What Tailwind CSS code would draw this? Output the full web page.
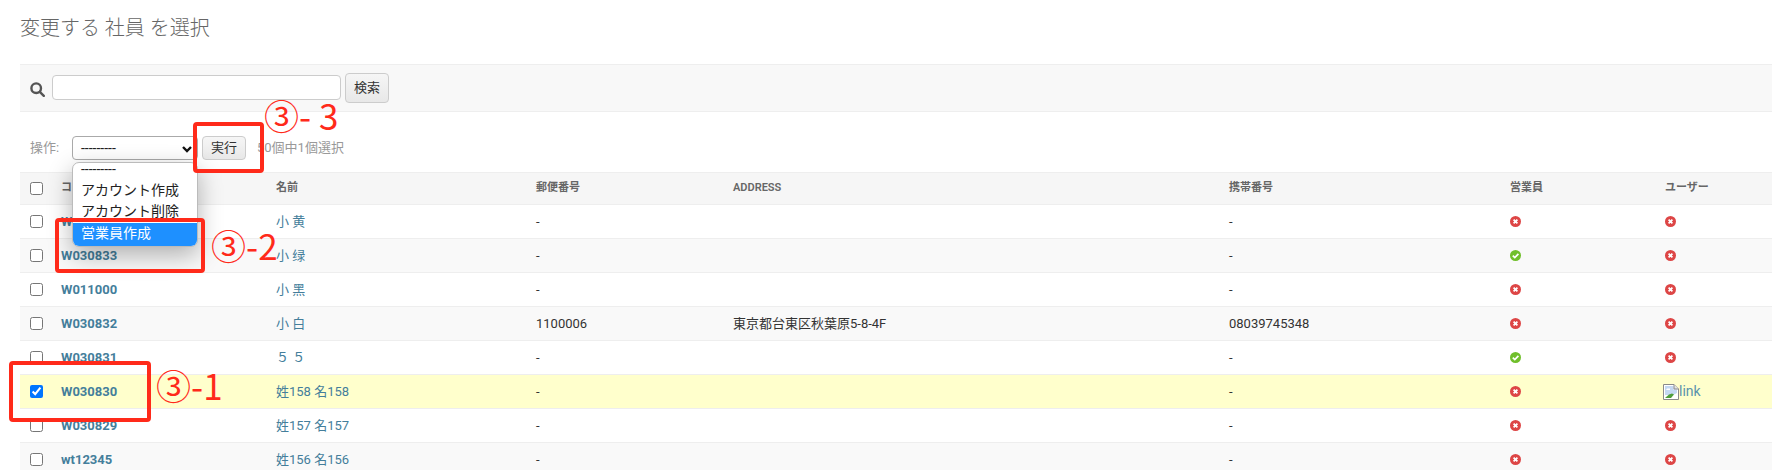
<!DOCTYPE html>
<html lang="ja">
<head>
    <meta charset="UTF-8">
    <title>変更する 社員 を選択</title>
    <script src="https://cdn.jsdelivr.net/npm/@tailwindcss/browser@4"></script>
</head>
<body class="bg-white h-[470px] w-[1772px] overflow-hidden relative font-['Roboto','Noto_Sans_CJK_JP',sans-serif] text-[13px] text-[#333]">

    <div class="pl-5">
        <h1 class="h-[64px] pt-[15px] text-[20px] leading-[26px] font-light text-[#666]">変更する 社員 を選択</h1>

        <!-- search -->
        <div class="h-[48px] flex items-center bg-[#f8f8f8] border-y border-[#eee] pl-[10px]">
            <svg class="w-[15px] h-[15px] mr-[7px] mt-[2px]" viewBox="0 0 15 15" fill="none" stroke="#555" stroke-width="2.4">
                <circle cx="6.200" cy="6.200" r="4.800"/>
                <path d="M9.800 9.800l4 4" stroke-linecap="round"/>
            </svg>
            <input type="text" class="w-[289px] h-[25px] mb-[2px] bg-white border border-[#ccc] rounded-[4px]">
            <button class="w-[44px] h-[30px] ml-[4px] border border-[#ccc] rounded-[4px] bg-linear-to-b from-[#f6f6f6] to-[#e8e8e8] text-[#333]">検索</button>
        </div>

        <!-- actions -->
        <div class="h-[60px] flex items-center pl-[10px] pt-[14px] pb-[2px] text-[#999]">
            <span class="w-[42px]">操作:</span>
            <div class="relative w-[126px] h-[24px] border border-[#aaa] rounded-[4px] bg-white flex items-center pl-[8px] text-[14px] text-[#222]">
                ---------
                <svg class="absolute right-[5px] top-[9px] w-[10px] h-[7px]" viewBox="0 0 10 7" fill="none" stroke="#111" stroke-width="2.4"><path d="M1 1l4 4 4-4"/></svg>
            </div>
            <button class="w-[44px] h-[24px] ml-[4px] border border-[#ccc] rounded-[4px] bg-linear-to-b from-[#f6f6f6] to-[#e8e8e8] text-[#333]">実行</button>
            <span class="ml-[11px]">50個中1個選択</span>
        </div>

        <!-- change list -->
        <table class="table-fixed border-collapse w-[1752px] text-left">
            <colgroup>
                <col class="w-[31px]"><col class="w-[215px]"><col class="w-[260px]"><col class="w-[197px]">
                <col class="w-[496px]"><col class="w-[281px]"><col class="w-[155px]"><col class="w-[117px]">
            </colgroup>
            <thead>
                <tr class="h-[32px] bg-[#f6f6f6] border-y border-[#eee] text-[11px] font-semibold text-[#666]">
                    <th class="pl-[10px]"><input type="checkbox" class="block w-[13px] h-[13px]"></th>
                    <th class="pl-[10px] font-semibold">コード</th>
                    <th class="pl-[10px] font-semibold">名前</th>
                    <th class="pl-[10px] font-semibold">郵便番号</th>
                    <th class="pl-[10px] font-semibold">ADDRESS</th>
                    <th class="pl-[10px] font-semibold">携帯番号</th>
                    <th class="pl-[10px] font-semibold">営業員</th>
                    <th class="pl-[10px] font-semibold">ユーザー</th>
                </tr>
            </thead>
            <tbody>
                <tr class="h-[34px] border-b border-[#eee] bg-white">
                    <td class="pl-[10px]"><input type="checkbox" class="block w-[13px] h-[13px]"></td>
                    <td class="pl-[10px] font-bold text-[#447e9b]">W030834</td>
                    <td class="pl-[10px] text-[#447e9b]">小 黄</td>
                    <td class="pl-[10px]">-</td><td class="pl-[10px]"></td><td class="pl-[10px]">-</td>
                    <td class="pl-[10px]"><svg class="w-[11px] h-[11px]" viewBox="0 0 11 11"><circle cx="5.5" cy="5.5" r="5.5" fill="#dd4646"/><path d="M3.6 3.6l3.8 3.8M7.4 3.6l-3.8 3.8" stroke="#fff" stroke-width="1.8"/></svg></td>
                    <td class="pl-[10px]"><svg class="w-[11px] h-[11px]" viewBox="0 0 11 11"><circle cx="5.5" cy="5.5" r="5.5" fill="#dd4646"/><path d="M3.6 3.6l3.8 3.8M7.4 3.6l-3.8 3.8" stroke="#fff" stroke-width="1.8"/></svg></td>
                </tr>
                <tr class="h-[34px] border-b border-[#eee] bg-[#f9f9f9]">
                    <td class="pl-[10px]"><input type="checkbox" class="block w-[13px] h-[13px]"></td>
                    <td class="pl-[10px] font-bold text-[#447e9b]">W030833</td>
                    <td class="pl-[10px] text-[#447e9b]">小 绿</td>
                    <td class="pl-[10px]">-</td><td class="pl-[10px]"></td><td class="pl-[10px]">-</td>
                    <td class="pl-[10px]"><svg class="w-[11px] h-[11px]" viewBox="0 0 11 11"><circle cx="5.5" cy="5.5" r="5.5" fill="#70bf2b"/><path d="M2.8 5.6l2 2 3.6-3.8" fill="none" stroke="#fff" stroke-width="1.7"/></svg></td>
                    <td class="pl-[10px]"><svg class="w-[11px] h-[11px]" viewBox="0 0 11 11"><circle cx="5.5" cy="5.5" r="5.5" fill="#dd4646"/><path d="M3.6 3.6l3.8 3.8M7.4 3.6l-3.8 3.8" stroke="#fff" stroke-width="1.8"/></svg></td>
                </tr>
                <tr class="h-[34px] border-b border-[#eee] bg-white">
                    <td class="pl-[10px]"><input type="checkbox" class="block w-[13px] h-[13px]"></td>
                    <td class="pl-[10px] font-bold text-[#447e9b]">W011000</td>
                    <td class="pl-[10px] text-[#447e9b]">小 黑</td>
                    <td class="pl-[10px]">-</td><td class="pl-[10px]"></td><td class="pl-[10px]">-</td>
                    <td class="pl-[10px]"><svg class="w-[11px] h-[11px]" viewBox="0 0 11 11"><circle cx="5.5" cy="5.5" r="5.5" fill="#dd4646"/><path d="M3.6 3.6l3.8 3.8M7.4 3.6l-3.8 3.8" stroke="#fff" stroke-width="1.8"/></svg></td>
                    <td class="pl-[10px]"><svg class="w-[11px] h-[11px]" viewBox="0 0 11 11"><circle cx="5.5" cy="5.5" r="5.5" fill="#dd4646"/><path d="M3.6 3.6l3.8 3.8M7.4 3.6l-3.8 3.8" stroke="#fff" stroke-width="1.8"/></svg></td>
                </tr>
                <tr class="h-[34px] border-b border-[#eee] bg-[#f9f9f9]">
                    <td class="pl-[10px]"><input type="checkbox" class="block w-[13px] h-[13px]"></td>
                    <td class="pl-[10px] font-bold text-[#447e9b]">W030832</td>
                    <td class="pl-[10px] text-[#447e9b]">小 白</td>
                    <td class="pl-[10px]">1100006</td><td class="pl-[10px]">東京都台東区秋葉原5-8-4F</td><td class="pl-[10px]">08039745348</td>
                    <td class="pl-[10px]"><svg class="w-[11px] h-[11px]" viewBox="0 0 11 11"><circle cx="5.5" cy="5.5" r="5.5" fill="#dd4646"/><path d="M3.6 3.6l3.8 3.8M7.4 3.6l-3.8 3.8" stroke="#fff" stroke-width="1.8"/></svg></td>
                    <td class="pl-[10px]"><svg class="w-[11px] h-[11px]" viewBox="0 0 11 11"><circle cx="5.5" cy="5.5" r="5.5" fill="#dd4646"/><path d="M3.6 3.6l3.8 3.8M7.4 3.6l-3.8 3.8" stroke="#fff" stroke-width="1.8"/></svg></td>
                </tr>
                <tr class="h-[34px] border-b border-[#eee] bg-white">
                    <td class="pl-[10px]"><input type="checkbox" class="block w-[13px] h-[13px]"></td>
                    <td class="pl-[10px] font-bold text-[#447e9b]">W030831</td>
                    <td class="pl-[10px] text-[#447e9b]">５ ５</td>
                    <td class="pl-[10px]">-</td><td class="pl-[10px]"></td><td class="pl-[10px]">-</td>
                    <td class="pl-[10px]"><svg class="w-[11px] h-[11px]" viewBox="0 0 11 11"><circle cx="5.5" cy="5.5" r="5.5" fill="#70bf2b"/><path d="M2.8 5.6l2 2 3.6-3.8" fill="none" stroke="#fff" stroke-width="1.7"/></svg></td>
                    <td class="pl-[10px]"><svg class="w-[11px] h-[11px]" viewBox="0 0 11 11"><circle cx="5.5" cy="5.5" r="5.5" fill="#dd4646"/><path d="M3.6 3.6l3.8 3.8M7.4 3.6l-3.8 3.8" stroke="#fff" stroke-width="1.8"/></svg></td>
                </tr>
                <tr class="h-[34px] border-b border-[#eee] bg-[#ffc]">
                    <td class="pl-[10px]"><input type="checkbox" checked class="block w-[13px] h-[13px] accent-[#0075ff]"></td>
                    <td class="pl-[10px] font-bold text-[#447e9b]">W030830</td>
                    <td class="pl-[10px] text-[#447e9b]">姓158 名158</td>
                    <td class="pl-[10px]">-</td><td class="pl-[10px]"></td><td class="pl-[10px]">-</td>
                    <td class="pl-[10px]"><svg class="w-[11px] h-[11px]" viewBox="0 0 11 11"><circle cx="5.5" cy="5.5" r="5.5" fill="#dd4646"/><path d="M3.6 3.6l3.8 3.8M7.4 3.6l-3.8 3.8" stroke="#fff" stroke-width="1.8"/></svg></td>
                    <td class="pl-[8px] text-[#5b93ad]">
                        <span class="flex items-center text-[14px]">
                            <svg class="w-[16px] h-[16px]" viewBox="0 0 16 16"><path d="M.5.5H11L15.500 5v10.500H.5z" fill="#fff" stroke="#8a8a8a"/><path d="M2 2h8.500v3.500H14V9L10 11H2z" fill="#c4d8f2"/><path d="M4 4.500h3v1.500H3z" fill="#fff"/><path d="M11 .5V5h4.500" fill="#e4e4e4" stroke="#8a8a8a"/><path d="M2 14l4-3.500 3-1 2 1-3 3.500z" fill="#4f9e3c"/></svg>link
                        </span>
                    </td>
                </tr>
                <tr class="h-[34px] border-b border-[#eee] bg-white">
                    <td class="pl-[10px]"><input type="checkbox" class="block w-[13px] h-[13px]"></td>
                    <td class="pl-[10px] font-bold text-[#447e9b]">W030829</td>
                    <td class="pl-[10px] text-[#447e9b]">姓157 名157</td>
                    <td class="pl-[10px]">-</td><td class="pl-[10px]"></td><td class="pl-[10px]">-</td>
                    <td class="pl-[10px]"><svg class="w-[11px] h-[11px]" viewBox="0 0 11 11"><circle cx="5.5" cy="5.5" r="5.5" fill="#dd4646"/><path d="M3.6 3.6l3.8 3.8M7.4 3.6l-3.8 3.8" stroke="#fff" stroke-width="1.8"/></svg></td>
                    <td class="pl-[10px]"><svg class="w-[11px] h-[11px]" viewBox="0 0 11 11"><circle cx="5.5" cy="5.5" r="5.5" fill="#dd4646"/><path d="M3.6 3.6l3.8 3.8M7.4 3.6l-3.8 3.8" stroke="#fff" stroke-width="1.8"/></svg></td>
                </tr>
                <tr class="h-[34px] border-b border-[#eee] bg-[#f9f9f9]">
                    <td class="pl-[10px]"><input type="checkbox" class="block w-[13px] h-[13px]"></td>
                    <td class="pl-[10px] font-bold text-[#447e9b]">wt12345</td>
                    <td class="pl-[10px] text-[#447e9b]">姓156 名156</td>
                    <td class="pl-[10px]">-</td><td class="pl-[10px]"></td><td class="pl-[10px]">-</td>
                    <td class="pl-[10px]"><svg class="w-[11px] h-[11px]" viewBox="0 0 11 11"><circle cx="5.5" cy="5.5" r="5.5" fill="#dd4646"/><path d="M3.6 3.6l3.8 3.8M7.4 3.6l-3.8 3.8" stroke="#fff" stroke-width="1.8"/></svg></td>
                    <td class="pl-[10px]"><svg class="w-[11px] h-[11px]" viewBox="0 0 11 11"><circle cx="5.5" cy="5.5" r="5.5" fill="#dd4646"/><path d="M3.6 3.6l3.8 3.8M7.4 3.6l-3.8 3.8" stroke="#fff" stroke-width="1.8"/></svg></td>
                </tr>
            </tbody>
        </table>
    </div>

    <!-- open select menu -->
    <div class="absolute left-[72px] top-[162px] w-[126px] h-[85px] bg-white border border-[#bbb] rounded-[7px] overflow-hidden shadow-[0_8px_24px_rgba(0,0,0,0.3)] text-[14px] leading-[21px] text-[#222]">
        <div class="pl-[8px] h-[17px] leading-[13px]">---------</div>
        <div class="pl-[8px] h-[21px]">アカウント作成</div>
        <div class="pl-[8px] h-[22px]">アカウント削除</div>
        <div class="pl-[8px] h-[23px] bg-[#1e90ff] text-white">営業員作成</div>
    </div>

    <!-- red annotations -->
    <div class="absolute left-[193px] top-[122px] w-[71px] h-[51px] border-[4px] border-[#ff2a1a] rounded-[4px]"></div>
    <div class="absolute left-[55px] top-[218px] w-[150px] h-[55px] border-[4px] border-[#ff2a1a] rounded-[4px]"></div>
    <div class="absolute left-[9px] top-[361px] w-[142px] h-[61px] border-[4px] border-[#ff2a1a] rounded-[4px]"></div>
    <span class="absolute left-[264px] top-[97px] text-[35px] leading-[36px] text-[#ff2a1a] font-['Noto_Sans_CJK_JP',sans-serif]">③- 3</span>
    <span class="absolute left-[211px] top-[227px] text-[35px] leading-[36px] text-[#ff2a1a] font-['Noto_Sans_CJK_JP',sans-serif]">③-2</span>
    <span class="absolute left-[156px] top-[367px] text-[35px] leading-[36px] text-[#ff2a1a] font-['Noto_Sans_CJK_JP',sans-serif]">③-1</span>
</body>
</html>
